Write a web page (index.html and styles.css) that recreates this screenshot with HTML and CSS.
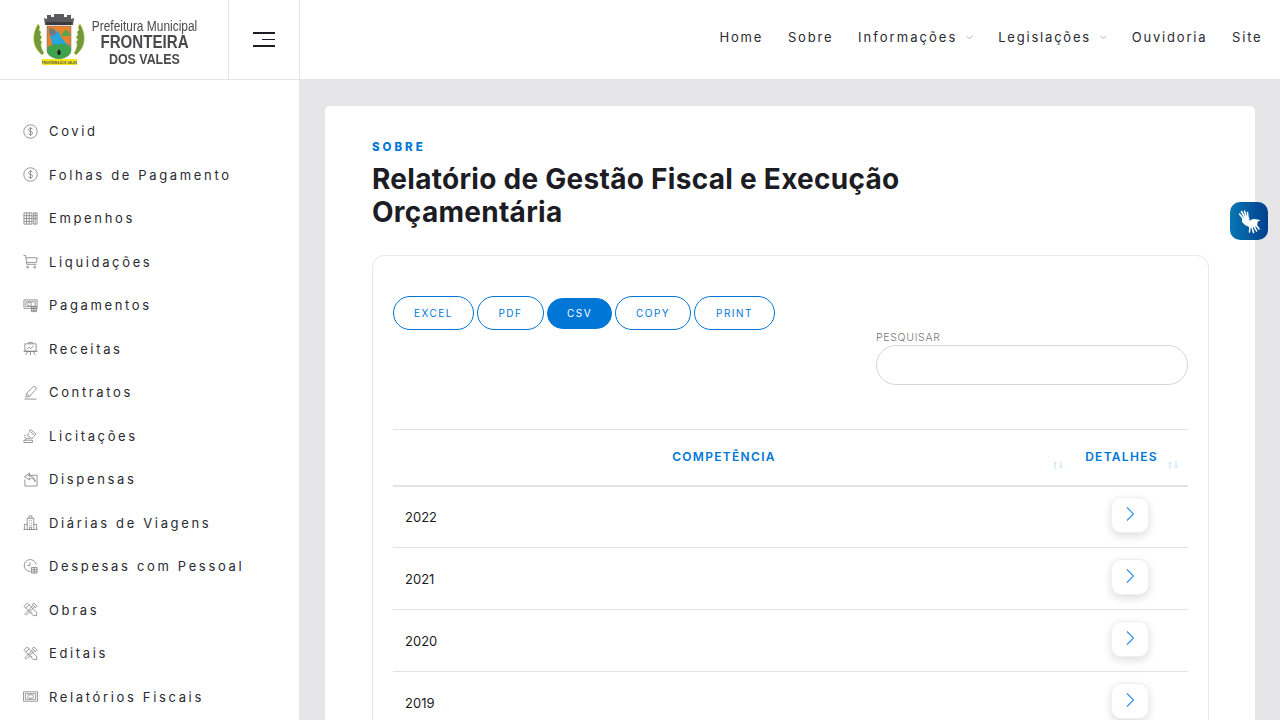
FILE: index.html
```html
<!DOCTYPE html>
<html lang="pt-BR">
<head>
<meta charset="utf-8">
<title>Relatório de Gestão Fiscal e Execução Orçamentária</title>
<link rel="stylesheet" href="styles.css">
</head>
<body>
<svg class="defs" width="0" height="0" aria-hidden="true">
  <symbol id="i-money" viewBox="0 0 16 16"><circle cx="8" cy="8" r="7.2"/><path d="M10.2 5.8C9.8 4.9 9 4.6 8 4.6c-1.200 0-2.100.6-2.100 1.600 0 2.200 4.300 1.200 4.300 3.500 0 1-.9 1.700-2.200 1.700-1.100 0-2-.4-2.400-1.300M8 3.200v9.600"/></symbol>
  <symbol id="i-book" viewBox="0 0 16 16"><path d="M1 2h8.500v12H1zM3.800 2v12M6.600 2v12M1 5h8.500M1 8h8.500M1 11h8.500M11 2h4v12h-4zM13 2v12M11 5h4M11 8h4"/></symbol>
  <symbol id="i-cart" viewBox="0 0 16 16"><path d="M.5 1.500h2.300l1.200 9.500h10.500M3.200 4h12l-1 5H3.800"/><circle cx="5" cy="14" r="1.100"/><circle cx="12.500" cy="14" r="1.100"/></symbol>
  <symbol id="i-pay" viewBox="0 0 16 16"><path d="M1 2h14v9H1zM3 4h10v5H3z"/><circle cx="7" cy="6.500" r="2"/><path d="M9 9h5.500v5.500H9zM9 11h5.500M9 13h5.500M11.500 9v5.500"/></symbol>
  <symbol id="i-board" viewBox="0 0 16 16"><path d="M.5 11h15M2 3h12v8H2zM6 3V1.500h4V3M4 9l2.500-2.500L8 8l3.500-3M5 11l-2 4M11 11l2 4M8 11v4"/></symbol>
  <symbol id="i-pen" viewBox="0 0 16 16"><path d="M1.500 15h13M3 13l1-4 6.500-7c1-1 3.500-.5 3.500 1.500 0 .7-.3 1.200-.8 1.700L7 12zM4 9l3 3"/></symbol>
  <symbol id="i-gavel" viewBox="0 0 16 16"><path d="M8 1.500l6 5-1.500 1.500-6-5zM6.500 5l-2 2.500 5 4 2-2.500M1 15.500h9v-2.500H1zM2.500 13l1-2h4"/><path d="M1 8h1.500M1.500 10H3"/></symbol>
  <symbol id="i-ret" viewBox="0 0 16 16"><path d="M5 3.500h10V15H2V8M7 1L1.500 5 7 8.500V6.500c3 0 5 1 6 4-.3-4-2.500-6-6-6.200z"/></symbol>
  <symbol id="i-city" viewBox="0 0 16 16"><path d="M.5 15.500h15M1.500 15.500V10h3M14.500 15.500V10h-3M4.500 15.500V3.500h7v12M6.500 3.500V1h3v2.500M6.500 6h1M8.500 6h1M6.500 8.500h1M8.500 8.500h1M6.500 11h1M8.500 11h1M7 15.500V13h2v2.500"/></symbol>
  <symbol id="i-clock" viewBox="0 0 16 16"><path d="M8 13.400A6.400 6.400 0 1 1 14 6"/><path d="M7.500 3.500v3.500H4.500M9 9h6v6H9zM9 11h6M9 13h6M12 9v6"/></symbol>
  <symbol id="i-tools" viewBox="0 0 16 16"><path d="M1 4.500L4.500 1l10 10v3.500H11zM3 6.500L6.500 3M6 9.500L7.500 8M8.500 12L10 10.500"/><path d="M10 2.500l1.500-1.500 3.500 3.500-1.500 1.500zM11 3.500L2 12.500l1.500 1.500L12.500 5"/></symbol>
  <symbol id="i-note" viewBox="0 0 16 16"><path d="M.5 3h15v10H.500zM2.500 5h11v6h-11z"/><ellipse cx="8" cy="8" rx="3.200" ry="2"/></symbol>
</svg>

<div class="app">
  <header class="topbar">
    <div class="brand">
      <svg class="crest" viewBox="0 0 56 56" aria-hidden="true">
        <path class="crown" d="M14 13L13 6l3 1V3h4v2h3V2h10v3h3V3h4v4l3-1-1 7z"/>
        <path class="crown-dark" d="M15 13h26v-3H15z"/>
        <path class="shield" d="M16 14h24v24c0 5-5 8-12 9-7-1-12-4-12-9z"/>
        <path class="rock" d="M18 16l5 1 3 4-3 3-3 0-2-3z"/>
        <path class="water" d="M19 24l5-1 3-5 3 7 5 6 4 3v3H20c2-3 1-8-1-13z"/>
        <path class="hill" d="M16 36c5-5 10-4 12-3 3-2 8-2 12 3v2c0 5-5 8-12 9-7-1-12-4-12-9z"/>
        <path class="tri" d="M30 24l5-7 5 7z"/>
        <path class="bird" d="M26 40l2-3 2 3-1 3h-2z"/>
        <path class="laurel" d="M7 12c-3 5-5 11-4 18 1 6 4 9 8 13l2-2c-2-3-3-6-3-9l1-2-2-2 2-3-2-2 1-3-2-2 1-3z"/>
        <path class="laurel" d="M49 12c3 5 5 11 4 18-1 6-4 9-8 13l-2-2c2-3 3-6 3-9l-1-2 2-2-2-3 2-2-1-3 2-2-1-3z"/>
        <path class="ribbon" d="M11 47h35v6H11z"/>
        <text class="ribbon-text" x="28.500" y="51.500">FRONTEIRA DOS VALES</text>
      </svg>
      <div class="brand-text">
        <span class="b1">Prefeitura Municipal</span>
        <span class="b2">FRONTEIRA</span>
        <span class="b3">DOS VALES</span>
      </div>
    </div>
    <button class="toggle" aria-label="Menu"><span class="bar"></span><span class="bar short"></span><span class="bar"></span></button>
    <nav class="topnav">
      <a>Home</a>
      <a>Sobre</a>
      <a class="has-sub wide">Informações<svg class="caret" viewBox="0 0 8 5"><path d="M.5.5L4 4 7.500.5"/></svg></a>
      <a class="has-sub">Legislações<svg class="caret" viewBox="0 0 8 5"><path d="M.5.5L4 4 7.500.5"/></svg></a>
      <a>Ouvidoria</a>
      <a>Site</a>
    </nav>
  </header>

  <aside class="sidebar">
    <ul class="menu">
      <li><svg class="ic"><use href="#i-money"/></svg>Covid</li>
      <li><svg class="ic"><use href="#i-money"/></svg>Folhas de Pagamento</li>
      <li><svg class="ic"><use href="#i-book"/></svg>Empenhos</li>
      <li><svg class="ic"><use href="#i-cart"/></svg>Liquidações</li>
      <li><svg class="ic"><use href="#i-pay"/></svg>Pagamentos</li>
      <li><svg class="ic"><use href="#i-board"/></svg>Receitas</li>
      <li><svg class="ic"><use href="#i-pen"/></svg>Contratos</li>
      <li><svg class="ic"><use href="#i-gavel"/></svg>Licitações</li>
      <li><svg class="ic"><use href="#i-ret"/></svg>Dispensas</li>
      <li><svg class="ic"><use href="#i-city"/></svg>Diárias de Viagens</li>
      <li><svg class="ic"><use href="#i-clock"/></svg>Despesas com Pessoal</li>
      <li><svg class="ic"><use href="#i-tools"/></svg>Obras</li>
      <li><svg class="ic"><use href="#i-tools"/></svg>Editais</li>
      <li><svg class="ic"><use href="#i-note"/></svg>Relatórios Fiscais</li>
    </ul>
  </aside>

  <main class="content">
    <section class="card">
      <p class="eyebrow">SOBRE</p>
      <h1 class="title">Relatório de Gestão Fiscal e Execução Orçamentária</h1>
      <div class="panel">
        <div class="tools">
          <div class="btns">
            <button class="btn">EXCEL</button>
            <button class="btn">PDF</button>
            <button class="btn active">CSV</button>
            <button class="btn">COPY</button>
            <button class="btn">PRINT</button>
          </div>
          <label class="search"><span>PESQUISAR</span><input type="text"></label>
        </div>
        <table class="grid">
          <thead>
            <tr>
              <th class="c1">COMPETÊNCIA<svg class="sort" viewBox="0 0 12 8"><path d="M3 8V1M1.500 2.500L3 1l1.500 1.500M9 0v7M7.500 5.500L9 7l1.500-1.500"/></svg></th>
              <th class="c2">DETALHES<svg class="sort" viewBox="0 0 12 8"><path d="M3 8V1M1.500 2.500L3 1l1.500 1.500M9 0v7M7.500 5.500L9 7l1.500-1.500"/></svg></th>
            </tr>
          </thead>
          <tbody>
            <tr><td>2022</td><td class="act"><button class="go" aria-label="Abrir"><svg viewBox="0 0 8 14"><path d="M1 .5L7.500 7 1 13.500"/></svg></button></td></tr>
            <tr><td>2021</td><td class="act"><button class="go" aria-label="Abrir"><svg viewBox="0 0 8 14"><path d="M1 .5L7.500 7 1 13.500"/></svg></button></td></tr>
            <tr><td>2020</td><td class="act"><button class="go" aria-label="Abrir"><svg viewBox="0 0 8 14"><path d="M1 .5L7.500 7 1 13.500"/></svg></button></td></tr>
            <tr><td>2019</td><td class="act"><button class="go" aria-label="Abrir"><svg viewBox="0 0 8 14"><path d="M1 .5L7.500 7 1 13.500"/></svg></button></td></tr>
          </tbody>
        </table>
      </div>
    </section>
  </main>

  <a class="vlibras" aria-label="Acessibilidade em Libras">
    <svg viewBox="0 0 38 38">
      <path class="fingers" d="M9.500 12l4 5M11.500 9.500l3.500 6.500M14.500 9l2 7M17.500 10.500l.5 6"/>
      <path class="palm" d="M12 16l7-1 1 6-4 3-4-4z"/>
      <path class="palm" d="M17 20l6-3 5 1-1 6-6 2-4-2z"/>
      <path class="fingers" d="M24 18l5 .5M26 23l3 4M24 24l2.500 5M22 25l1.500 5.500M20 25l-.5 5"/>
    </svg>
  </a>
</div>
</body>
</html>
```
FILE: styles.css
```css
* { box-sizing: border-box; }
html, body { margin: 0; height: 720px; overflow: hidden; background: #e6e6e9; }
body { font-family: "Inter", "Liberation Sans", sans-serif; color: #1c1c24; }
.defs { position: absolute; }

.app { display: grid; grid-template-columns: 300px 1fr; grid-template-rows: 80px 640px; height: 720px; position: relative; }

.topbar { grid-column: 1 / 3; display: flex; background: #fff; border-bottom: 1px solid #e6e6e9; }
.brand { width: 229px; border-right: 1px solid #e6e6e9; display: flex; align-items: center; padding-left: 31px; gap: 4px; filter: blur(.35px); }
.crest { width: 56px; height: 56px; flex: none; }
.crown { fill: #5a5a5c; }
.crown-dark { fill: #3b3b3d; }
.shield { fill: #e8822c; stroke: #666; stroke-width: .5; }
.rock { fill: #6d7a80; }
.water { fill: #27a6dc; }
.hill { fill: #3fa34d; }
.tri { fill: #4aa84f; }
.bird { fill: #222; }
.laurel { fill: #6f9a3c; stroke: #e5c93a; stroke-width: .5; }
.ribbon { fill: #f5e616; }
.ribbon-text { fill: #555; font-family: "Liberation Sans", sans-serif; font-size: 3px; font-weight: 700; text-anchor: middle; }
.brand-text { display: flex; flex-direction: column; align-items: center; width: 107px; margin-top: 5px; font-family: "Liberation Sans", sans-serif; color: #4a4a4c; }
.brand-text span { white-space: nowrap; }
.b1 { font-size: 15.500px; line-height: 16px; transform: scaleX(.77); }
.b2 { font-size: 18px; line-height: 17px; font-weight: 700; transform: scaleX(.84); }
.b3 { font-size: 14.500px; line-height: 15px; margin-top: 1px; font-weight: 700; transform: scaleX(.855); }

.toggle { width: 71px; border: 0; border-right: 1px solid #e6e6e9; background: #fff; padding: 0 24px 0 0; display: flex; flex-direction: column; align-items: flex-end; justify-content: center; gap: 5px; }
.bar { display: block; width: 22px; height: 1.500px; background: #1c1c24; }
.bar.short { width: 13px; }

.topnav { margin-left: auto; display: flex; align-items: center; gap: 24.750px; padding: 0 17.500px 5px 0; font-size: 13px; font-weight: 400; letter-spacing: 1.800px; color: #2a2a32; }
.has-sub { display: flex; align-items: center; }
.has-sub.wide { letter-spacing: 2.050px; }
.caret { width: 7px; height: 5px; margin-left: 9px; fill: none; stroke: #999; stroke-width: .8; }

.sidebar { background: #fff; border-right: 1px solid #e6e6e9; overflow: hidden; }
.menu { list-style: none; margin: 0; padding: 29.500px 0 0 23px; }
.menu li { display: flex; align-items: center; height: 43.500px; font-size: 13px; font-weight: 400; letter-spacing: 2.650px; color: #2a2a32; white-space: nowrap; }
.ic { width: 15px; height: 15px; margin-right: 11px; flex: none; fill: none; stroke: #777; stroke-width: .8; }

.content { overflow: hidden; padding: 26px 25px 0 25px; }
.card { background: #fff; border-radius: 5px; padding: 33px 46px 0 47px; height: 700px; }
.eyebrow { margin: 0; font-weight: 800; font-size: 11.500px; line-height: 16px; letter-spacing: 3px; color: #0077d6; }
.title { margin: 8px 0 26px; width: 600px; font-weight: 700; font-size: 28px; line-height: 33px; letter-spacing: .28px; color: #1c1c24; }

.panel { border: 1px solid #e8e8ea; border-radius: 12px; padding: 40px 20px 0 20px; height: 560px; }
.tools { display: flex; justify-content: space-between; height: 133px; }
.btns { display: flex; gap: 3px; align-items: center; height: 34px; }
.btn { height: 34px; border: 1px solid #0077d6; border-radius: 17px; background: #fff; color: #0077d6; font-family: "Inter", sans-serif; font-size: 10px; font-weight: 400; letter-spacing: 1.500px; padding: 0; }
.btn:nth-child(1) { width: 81px; }
.btn:nth-child(2) { width: 67px; }
.btn:nth-child(3) { width: 65px; height: 31px; }
.btn:nth-child(4) { width: 76px; }
.btn:nth-child(5) { width: 81px; }
.btn.active { background: #0077d6; border-color: #0077d6; color: #fff; }
.search { display: flex; flex-direction: column; width: 312px; margin-top: 34px; font-size: 10.500px; font-weight: 300; letter-spacing: .7px; color: #777; }
.search span { line-height: 15px; }
.search input { height: 40px; border: 1px solid #d3d6df; border-radius: 20px; background: #fff; outline: 0; }

.grid { width: 795px; border-collapse: collapse; table-layout: fixed; font-size: 13px; color: #1c1c24; }
.grid th { position: relative; height: 56px; padding: 0 30px 2px 12px; border-top: 1px solid #e3e3e6; border-bottom: 2px solid #e3e3e6; font-size: 12px; font-weight: 600; letter-spacing: 1.300px; color: #0077d6; text-align: center; }
.c1 { width: 680px; }
.sort { position: absolute; right: 9px; bottom: 16px; width: 12px; height: 8px; fill: none; stroke: #c4e0f7; stroke-width: 1; }
.grid td { height: 62px; padding: 0 12px; border-bottom: 1px solid #e3e3e6; }
.act { text-align: center; }
.grid td.act { padding: 0 13px 3px 11px; }
.go { width: 38px; height: 36px; border: 1px solid #f0f0f2; border-radius: 10px; background: #fff; box-shadow: 0 3px 8px rgba(0, 0, 0, .14); padding: 0 0 3px; display: inline-flex; align-items: center; justify-content: center; vertical-align: middle; }
.go svg { width: 8px; height: 14px; fill: none; stroke: #2a8fe6; stroke-width: 1.100; }

.vlibras { position: absolute; left: 1230px; top: 202px; width: 38px; height: 38px; border-radius: 10px; background: linear-gradient(90deg, #0877b3, #023f8c); }
.vlibras svg { display: block; width: 38px; height: 38px; }
.fingers { fill: none; stroke: #fff; stroke-width: 1.600; stroke-linecap: round; }
.palm { fill: #fff; }
```
